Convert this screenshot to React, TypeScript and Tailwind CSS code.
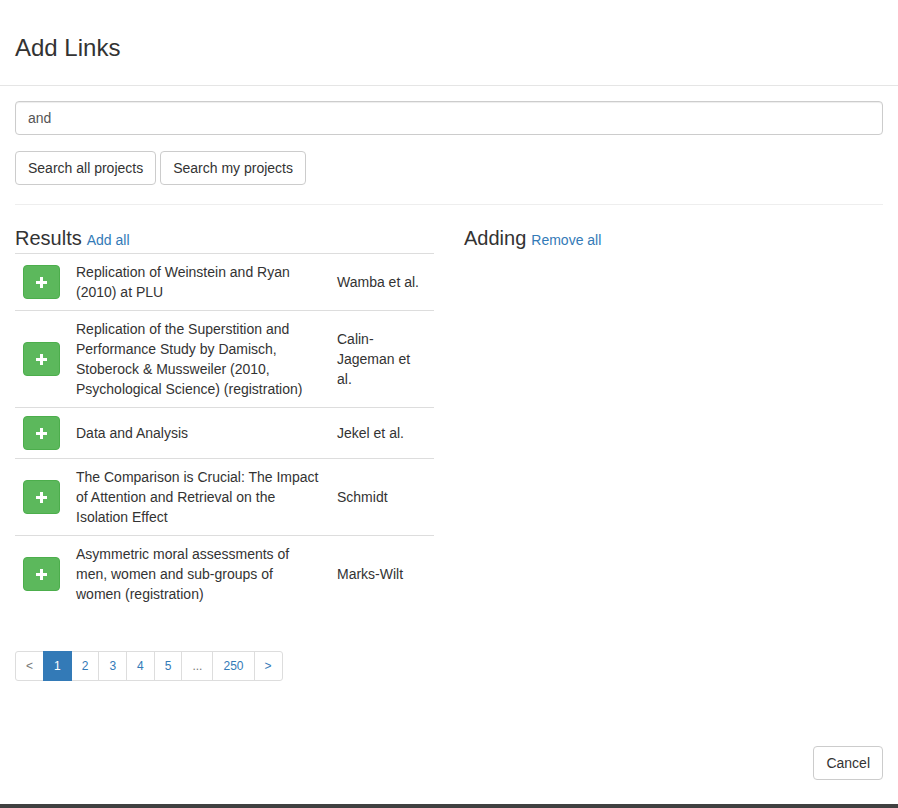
import React from "react";

type Result = { title: string; authors: string };

const results: Result[] = [
  { title: "Replication of Weinstein and Ryan (2010) at PLU", authors: "Wamba et al." },
  {
    title: "Replication of the Superstition and Performance Study by Damisch, Stoberock & Mussweiler (2010, Psychological Science) (registration)",
    authors: "Calin-Jageman et al.",
  },
  { title: "Data and Analysis", authors: "Jekel et al." },
  {
    title: "The Comparison is Crucial: The Impact of Attention and Retrieval on the Isolation Effect",
    authors: "Schmidt",
  },
  {
    title: "Asymmetric moral assessments of men, women and sub-groups of women (registration)",
    authors: "Marks-Wilt",
  },
];

const pages = ["<", "1", "2", "3", "4", "5", "...", "250", ">"];

function PlusButton() {
  return (
    <button className="w-[37px] h-[34px] rounded-[4px] bg-[#5cb85c] border border-[#4cae4c] flex items-center justify-center">
      <svg width="11" height="11" viewBox="0 0 11 11">
        <rect x="4" y="0" width="3" height="11" fill="#fff" />
        <rect x="0" y="4" width="11" height="3" fill="#fff" />
      </svg>
    </button>
  );
}

export default function App() {
  return (
    <div className="w-[898px] h-[808px] flex flex-col bg-[#404040] text-[#333] text-[14px] leading-[20px] font-['Liberation_Sans',Arial,sans-serif]">
      <div className="h-[804px] bg-white flex flex-col">
        {/* header */}
        <div className="pt-[35px] pb-[24px] px-[15px] border-b border-[#e5e5e5]">
          <h3 className="text-[24px] leading-[26px] font-normal">Add Links</h3>
        </div>

        {/* body */}
        <div className="px-[15px] pt-[15px]">
          <input
            readOnly
            value="and"
            className="w-full h-[34px] px-[12px] border border-[#ccc] rounded-[4px] shadow-[inset_0_1px_1px_rgba(0,0,0,0.075)] outline-none text-[14px] text-[#555]"
          />
          <div className="flex gap-[4px] mt-[16px]">
            <button className="h-[34px] px-[12px] border border-[#ccc] rounded-[4px] bg-white text-[#333]">Search all projects</button>
            <button className="h-[34px] px-[12px] border border-[#ccc] rounded-[4px] bg-white text-[#333]">Search my projects</button>
          </div>
          <div className="mt-[19px] border-t border-[#eee]" />
        </div>

        <div className="flex">
          {/* results column */}
          <div className="w-[449px] px-[15px]">
            <div className="mt-[22px] mb-[3px] flex items-baseline gap-[5px]">
              <span className="text-[20px] leading-[22px]">Results</span>
              <a className="text-[#337ab7]">Add all</a>
            </div>
            <div className="border-t border-[#ddd]">
              {results.map((r, i) => (
                <div
                  key={i}
                  className={`grid grid-cols-[53px_261px_1fr] items-center ${i < results.length - 1 ? "border-b border-[#ddd]" : ""}`}
                >
                  <div className="py-[8px] pl-[8px]">
                    <PlusButton />
                  </div>
                  <div className="p-[8px]">{r.title}</div>
                  <div className="p-[8px]">{r.authors}</div>
                </div>
              ))}
            </div>

            <div className="mt-[39px] flex">
              {pages.map((p, i) => {
                const active = p === "1";
                const muted = p === "<" || p === "...";
                return (
                  <span
                    key={i}
                    className={`h-[30px] px-[10px] flex items-center text-[12px] border ${i > 0 ? "-ml-px" : ""} ${
                      i === 0 ? "rounded-l-[3px]" : ""
                    } ${i === pages.length - 1 ? "rounded-r-[3px]" : ""} ${
                      active
                        ? "bg-[#337ab7] border-[#337ab7] text-white relative"
                        : muted
                        ? "border-[#ddd] text-[#777]"
                        : "border-[#ddd] text-[#337ab7]"
                    }`}
                  >
                    {p}
                  </span>
                );
              })}
            </div>
          </div>

          {/* adding column */}
          <div className="w-[449px] px-[15px]">
            <div className="mt-[22px] flex items-baseline gap-[5px]">
              <span className="text-[20px] leading-[22px]">Adding</span>
              <a className="text-[#337ab7]">Remove all</a>
            </div>
          </div>
        </div>

        {/* footer */}
        <div className="mt-auto flex justify-end px-[15px] pb-[24px]">
          <button className="h-[34px] px-[12px] border border-[#ccc] rounded-[4px] bg-white text-[#333]">Cancel</button>
        </div>
      </div>
    </div>
  );
}
